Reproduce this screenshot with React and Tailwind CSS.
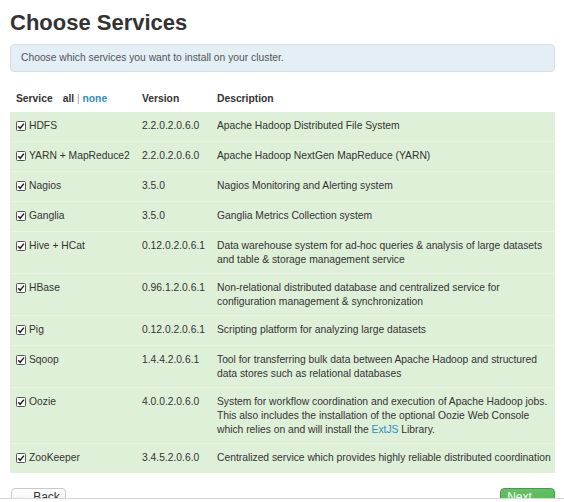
import React from 'react';

const services = [
  { name: 'HDFS', version: '2.2.0.2.0.6.0', desc: 'Apache Hadoop Distributed File System' },
  { name: 'YARN + MapReduce2', version: '2.2.0.2.0.6.0', desc: 'Apache Hadoop NextGen MapReduce (YARN)' },
  { name: 'Nagios', version: '3.5.0', desc: 'Nagios Monitoring and Alerting system' },
  { name: 'Ganglia', version: '3.5.0', desc: 'Ganglia Metrics Collection system' },
  { name: 'Hive + HCat', version: '0.12.0.2.0.6.1', desc: 'Data warehouse system for ad-hoc queries & analysis of large datasets and table & storage management service' },
  { name: 'HBase', version: '0.96.1.2.0.6.1', desc: 'Non-relational distributed database and centralized service for configuration management & synchronization' },
  { name: 'Pig', version: '0.12.0.2.0.6.1', desc: 'Scripting platform for analyzing large datasets' },
  { name: 'Sqoop', version: '1.4.4.2.0.6.1', desc: 'Tool for transferring bulk data between Apache Hadoop and structured data stores such as relational databases' },
  {
    name: 'Oozie',
    version: '4.0.0.2.0.6.0',
    desc: (
      <>
        System for workflow coordination and execution of Apache Hadoop jobs. This also includes the installation of the optional Oozie Web Console which relies on and will install the{' '}
        <a className="text-[#2a8fc4]">ExtJS</a> Library.
      </>
    ),
  },
  { name: 'ZooKeeper', version: '3.4.5.2.0.6.0', desc: 'Centralized service which provides highly reliable distributed coordination' },
];

const Check = () => (
  <svg width="10" height="10" viewBox="0 0 10 10" className="shrink-0">
    <rect x="0.5" y="0.5" width="9" height="9" rx="1" fill="#fff" stroke="#555" />
    <path d="M2.2 5.2 L4.2 7.3 L7.9 2.6" fill="none" stroke="#222" strokeWidth="1.5" />
  </svg>
);

export default function App() {
  return (
    <div className="w-[564px] h-[499px] overflow-hidden border-b border-[#d8d8d8] bg-white font-['Liberation_Sans',Arial,sans-serif] text-[#333]">
      <div className="pl-[10px] pr-[9px]">
        <h1 className="pt-[10px] text-[22px] leading-[26px] font-bold text-[#333]">Choose Services</h1>

        <div className="mt-[8px] h-[28px] flex items-center pl-[10px] rounded-[4px] border border-[#d3e0e8] bg-[#e3eef5] text-[10.3px] text-[#555]">
          Choose which services you want to install on your cluster.
        </div>

        <div className="mt-[14px] h-[26px] grid grid-cols-[126px_75px_1fr] items-center text-[10.3px] font-bold">
          <div className="pl-[6px] flex gap-[10px]">
            <span>Service</span>
            <span>
              all <span className="font-normal text-[#999]">|</span> <a className="text-[#2a8fc4]">none</a>
            </span>
          </div>
          <div className="pl-[6px]">Version</div>
          <div className="pl-[6px]">Description</div>
        </div>

        <div className="bg-[#dff0d8] text-[10.3px] leading-[14px]">
          {services.map((s) => (
            <div
              key={s.name}
              className="grid grid-cols-[126px_75px_1fr] py-[6px] border-b border-[#e9f4e4] last:border-b-0"
            >
              <div className="pl-[6px] flex items-start pt-[1px] gap-[3px] h-[17px]">
                <span className="pt-[2px]"><Check /></span>
                <span>{s.name}</span>
              </div>
              <div className="pl-[6px] pt-[1px]">{s.version}</div>
              <div className="pl-[6px] pr-[2px] pt-[1px]">{s.desc}</div>
            </div>
          ))}
        </div>

        <div className="mt-[15px] flex justify-between pl-[1px]">
          <button className="w-[55px] h-[30px] flex justify-center items-start pt-[1px] leading-[14px] rounded-[4px] border border-[#c8c8c8] bg-gradient-to-b from-white to-[#e6e6e6] text-[12px] text-[#333]">
            <span className="text-[#bbb] mr-[4px]">←</span>Back
          </button>
          <button className="w-[55px] h-[30px] flex justify-center items-start pt-[1px] leading-[14px] rounded-[4px] border border-[#4a9a4a] bg-gradient-to-b from-[#62c462] to-[#51a351] text-[12px] text-white">
            Next<span className="ml-[4px]">→</span>
          </button>
        </div>
      </div>
    </div>
  );
}
